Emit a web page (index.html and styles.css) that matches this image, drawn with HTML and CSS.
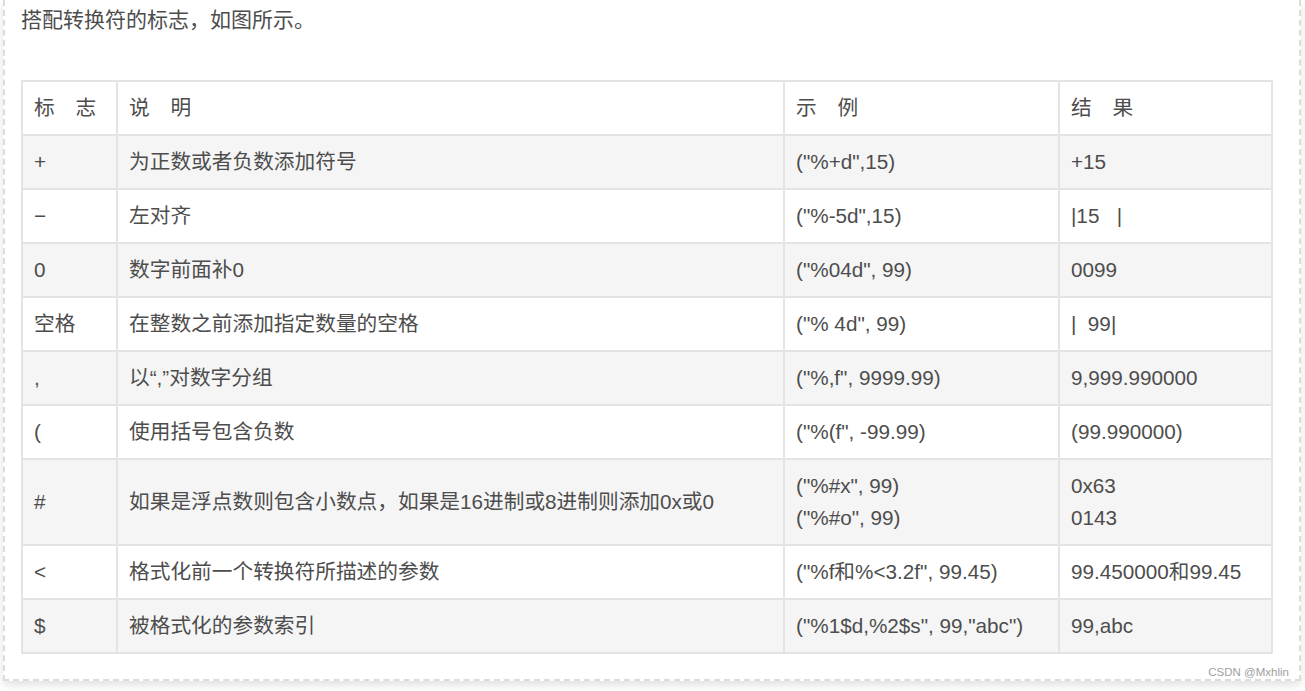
FILE: index.html
```html
<!DOCTYPE html>
<html lang="zh">
<head>
<meta charset="utf-8">
<link rel="stylesheet" href="styles.css">
</head>
<body>
<div class="box">
  <p class="intro">搭配转换符的标志，如图所示。</p>
  <table class="flags">
    <colgroup>
      <col class="c1"><col class="c2"><col class="c3"><col class="c4">
    </colgroup>
    <tr class="head"><td>标　志</td><td>说　明</td><td>示　例</td><td>结　果</td></tr>
    <tr class="alt"><td>+</td><td>为正数或者负数添加符号</td><td>("%+d",15)</td><td>+15</td></tr>
    <tr><td>−</td><td>左对齐</td><td>("%-5d",15)</td><td>|15&nbsp;&nbsp;&nbsp;|</td></tr>
    <tr class="alt"><td>0</td><td>数字前面补0</td><td>("%04d", 99)</td><td>0099</td></tr>
    <tr><td>空格</td><td>在整数之前添加指定数量的空格</td><td>("% 4d", 99)</td><td>|&nbsp;&nbsp;99|</td></tr>
    <tr class="alt"><td>,</td><td>以“,”对数字分组</td><td>("%,f", 9999.99)</td><td>9,999.990000</td></tr>
    <tr><td>(</td><td>使用括号包含负数</td><td>("%(f", -99.99)</td><td>(99.990000)</td></tr>
    <tr class="alt tall"><td>#</td><td>如果是浮点数则包含小数点，如果是16进制或8进制则添加0x或0</td><td>("%#x", 99)<br>("%#o", 99)</td><td>0x63<br>0143</td></tr>
    <tr><td>&lt;</td><td>格式化前一个转换符所描述的参数</td><td>("%f和%&lt;3.2f", 99.45)</td><td>99.450000和99.45</td></tr>
    <tr class="alt"><td>$</td><td>被格式化的参数索引</td><td>("%1$d,%2$s", 99,"abc")</td><td>99,abc</td></tr>
  </table>
  <span class="mark">CSDN @Mxhlin</span>
</div>
</body>
</html>
```

FILE: styles.css
```css
html, body {
  margin: 0;
  padding: 0;
  background: #ffffff;
}
body {
  font-family: "Liberation Sans", "Noto Sans CJK SC", sans-serif;
  color: #4d4d4d;
  height: 691px;
  overflow: hidden;
}
.box {
  position: relative;
  margin-left: 3px;
  width: 1278px;
  border: 2px dashed #dcdcdc;
  border-top: none;
  padding: 0 0 25px 16px;
  background: #ffffff;
  box-shadow: 0 4px 8px rgba(0, 0, 0, 0.12);
}
.intro {
  margin: 0;
  padding-top: 5px;
  height: 80px;
  font-size: 21px;
  line-height: 30px;
  box-sizing: border-box;
}
.flags {
  border-collapse: collapse;
  table-layout: fixed;
  width: 1250px;
  font-size: 20.7px;
}
.c1 { width: 95px; }
.c2 { width: 667px; }
.c3 { width: 275px; }
.c4 { width: 213px; }
.flags td {
  border: 2px solid #e4e4e4;
  padding: 10px 11px;
  line-height: 32px;
  vertical-align: middle;
  white-space: nowrap;
}
.flags tr.alt td {
  background: #f5f5f5;
}
.mark {
  position: absolute;
  right: 10px;
  bottom: 1px;
  font-size: 11.5px;
  color: #a0a0a0;
}
```
